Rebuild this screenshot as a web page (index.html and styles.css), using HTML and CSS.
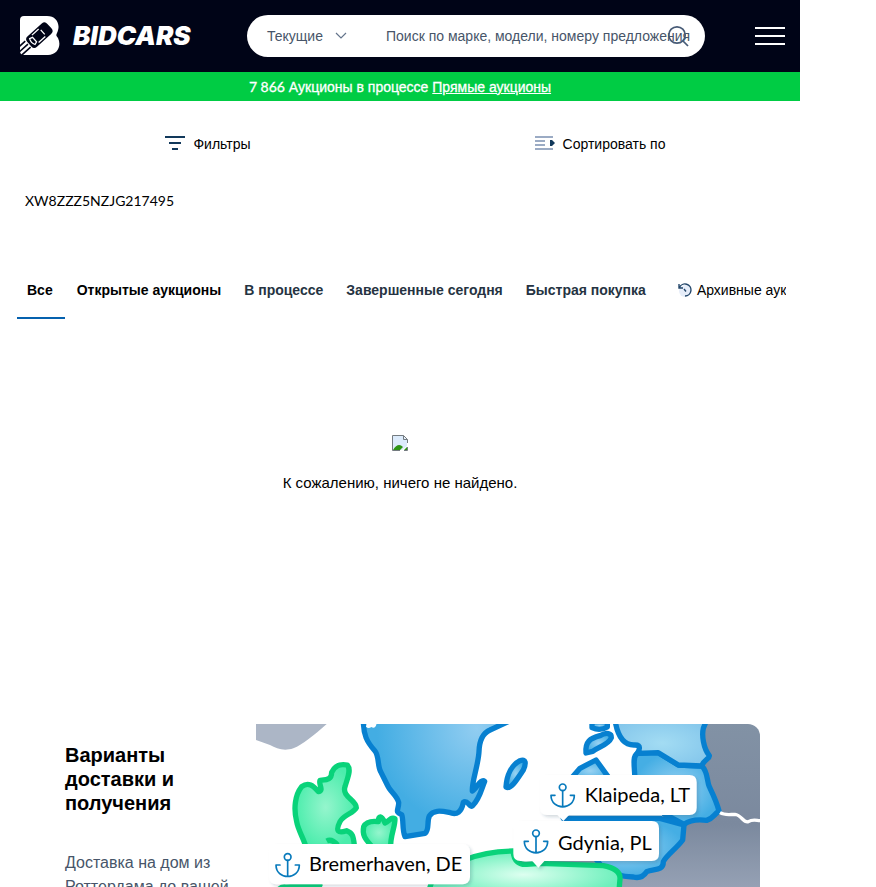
FILE: index.html
```html
<!DOCTYPE html>
<html lang="ru">
<head>
<meta charset="utf-8">
<title>BIDCARS</title>
<link rel="stylesheet" href="styles.css">
</head>
<body>
<div class="page">
  <header class="header">
    <a class="logo" href="#">
      <svg class="logo-mark" width="40" height="40" viewBox="0 0 40 40" aria-hidden="true">
        <path fill="#fff" d="M4 0H27C37 0 41 9 37 17C36 19 36 20 38 22C42 30 37 39 28 39H4Q0 39 0 35V4Q0 0 4 0Z"/>
        <g transform="translate(19 19.500) rotate(-42)">
          <rect x="-13" y="-7" width="27" height="14" rx="4" fill="#000417"/>
          <path fill="none" stroke="#fff" stroke-width="1.300" d="M-9-4Q-11 0-9 4L-6 3V-3ZM-5-5H4M-5 5H4M5-3V3"/>
          <path stroke="#000417" stroke-width="1.600" d="M-14-5H-22M-14-1H-27M-14 3H-26"/>
        </g>
      </svg>
      <span class="logo-name">BIDCARS</span>
    </a>
    <form class="search">
      <button class="search-type" type="button">Текущие
        <svg width="12" height="8" viewBox="0 0 12 8" aria-hidden="true"><path fill="none" stroke="#64748b" stroke-width="1.200" d="M1 1L6 6L11 1"/></svg>
      </button>
      <input class="search-input" type="text" aria-label="Поиск" placeholder="Поиск по марке, модели, номеру предложения">
      <button class="search-go" type="submit" aria-label="Найти">
        <svg width="22" height="22" viewBox="0 0 22 22" aria-hidden="true"><g fill="none" stroke="#475b76" stroke-width="1.700"><circle cx="10" cy="10" r="8.200"/><path d="M16 16L21 21"/></g></svg>
      </button>
    </form>
    <button class="menu" type="button" aria-label="Меню"><i></i><i></i><i></i></button>
  </header>
  <div class="live"><span class="latin">7 866</span> Аукционы в процессе <a href="#">Прямые аукционы</a></div>
  <div class="tools">
    <button type="button">
      <svg width="20" height="16" viewBox="0 0 20 16" aria-hidden="true"><path stroke="#12395b" stroke-width="2" d="M0 1H20M4 7H16M7 13H13"/></svg>Фильтры
    </button>
    <button type="button">
      <svg width="20" height="16" viewBox="0 0 20 16" aria-hidden="true"><path stroke="#9babc4" stroke-width="2" d="M0 1H18M0 5H10M0 9H10M0 13H18"/><path fill="#12395b" d="M15 4H17L20 7L17 10H15Z"/></svg>Сортировать по
    </button>
  </div>
  <p class="vin latin">XW8ZZZ5NZJG217495</p>
  <nav class="tabs">
    <a class="active" href="#">Все</a>
    <a class="dark" href="#">Открытые аукционы</a>
    <a href="#">В процессе</a>
    <a href="#">Завершенные сегодня</a>
    <a href="#">Быстрая покупка</a>
    <a class="archive" href="#">
      <svg width="14" height="14" viewBox="0 0 14 14" aria-hidden="true"><circle cx="7" cy="8" r="6" fill="#e6edf9"/><path fill="none" stroke="#24476b" stroke-width="1.400" d="M1 1V5H5M1.500 4.500A6 6 0 1 1 7 13M6 6L8 8.500"/></svg>Архивные аук
    </a>
  </nav>
  <section class="empty">
    <svg width="16" height="16" viewBox="0 0 16 16" aria-hidden="true"><path fill="#dcebfb" d="M1 1H11L15 5V11L10 15H1Z"/><path fill="#2e9415" d="M1 15Q6 7 11 12L8 15ZM12 15L15 12V15Z"/><path fill="none" stroke="#747b80" d="M15.500 8V4.500L11.500 .5H.5V15.500H8M11.500 .5V4.500H15.500M12 15.500H15.500V12"/></svg>
    <p>К сожалению, ничего не найдено.</p>
  </section>
  <section class="delivery">
    <div class="delivery-text">
      <h2>Варианты доставки и получения</h2>
      <p>Доставка на дом из Роттердама до вашей</p>
    </div>
    <svg class="map" viewBox="0 0 504 164" role="img" aria-label="Порты доставки">
      <defs>
        <radialGradient id="sweden" gradientUnits="userSpaceOnUse" cx="680" cy="40" r="300"><stop offset="0" stop-color="#91cdf1"/><stop offset="1" stop-color="#43ade3"/></radialGradient>
        <radialGradient id="green"><stop offset="0" stop-color="#95f5cd"/><stop offset="1" stop-color="#4bedac"/></radialGradient>
        <radialGradient id="poland"><stop offset="0" stop-color="#ddfff0"/><stop offset="1" stop-color="#6df0bc"/></radialGradient>
        <radialGradient id="blue"><stop offset="0" stop-color="#99d2f2"/><stop offset="1" stop-color="#45aee4"/></radialGradient>
        <radialGradient id="pale" r=".7"><stop offset="0" stop-color="#a3dcf3"/><stop offset="1" stop-color="#7fc3ea"/></radialGradient>
        <linearGradient id="land" x1="0" y1="0" x2="0" y2="1"><stop offset="0" stop-color="#8292a5"/><stop offset=".58" stop-color="#7b899e"/><stop offset="1" stop-color="#9aa5b8"/></linearGradient>
        <filter id="shadow" x="-10%" y="-20%" width="120%" height="150%"><feDropShadow dx="6" dy="6" stdDeviation="5" flood-color="#244664" flood-opacity=".2"/></filter>
        <g id="anchor" fill="none" stroke="#087abc" stroke-width="5" stroke-linecap="round"><circle cx="37" cy="12" r="10"/><path d="M37 22V70M2 36C2 82 72 82 72 36M2 36H14M72 36H60"/></g>
      </defs>
      <g transform="translate(-6 -9) scale(.333333)" stroke-width="16" stroke-linejoin="round">
        <path fill="#acb6c6" d="M18 20H238C195 58 160 88 130 100C100 110 80 100 60 90L18 75Z"/>
        <path fill="url(#sweden)" stroke="#0780d0" d="M340 15C340 60 350 80 375 108C388 125 382 152 392 170L412 210C420 230 440 240 446 262C447 285 432 290 455 299C461 312 456 345 465 365L525 355C539 345 530 320 538 303C550 285 570 287 597 292C622 302 635 290 640 262C652 252 660 280 668 272C690 250 695 220 704 199C692 190 680 220 667 228C665 200 685 150 687 110C688 75 697 55 720 45L785 15Z"/>
        <path fill="#fff" d="M350 25H380Q376 44 364 36Q355 43 348 35Z"/>
        <g fill="url(#green)" stroke="#09d37a">
          <path d="M170 405C165 375 145 350 140 320C130 280 135 240 155 215C175 200 190 212 205 230C223 225 205 210 210 196C230 194 245 195 245 172C255 150 270 146 292 150C305 165 292 190 285 215C275 245 319 255 319 278C310 295 280 300 270 320C255 350 265 355 290 347C312 355 310 370 315 405Z"/>
          <path d="M230 378Q245 370 263 390"/>
          <path d="M370 400C350 375 335 365 341 335C350 317 370 318 385 320C385 300 395 300 405 324C420 315 425 305 435 311C435 340 420 360 422 400Z"/>
          <path d="M76 540Q90 510 110 516L210 510Z"/>
        </g>
        <g transform="translate(750 0)">
          <path fill="url(#land)" d="M600 20H790V550H150V430L450 400Z"/>
          <g stroke="#0780d0">
            <path fill="url(#blue)" d="M18 216C20 180 35 150 60 137C78 130 79 145 70 165C50 195 32 225 18 216Z"/>
            <path fill="url(#blue)" d="M258 114C255 80 270 70 300 62C320 50 335 55 334 68C325 90 295 95 278 109Z"/>
            <path fill="url(#blue)" d="M276 20V38Q300 49 322 36V20Z"/>
            <path fill="url(#blue)" d="M205 200L240 160L288 135L335 200Z"/>
            <path fill="url(#blue)" d="M190 310H480L552 330L548 375C530 400 500 420 490 440C490 470 460 460 440 470C430 485 415 490 400 486C380 485 365 483 360 480L310 460Z"/>
            <path fill="url(#blue)" d="M405 200C405 160 395 125 412 115L475 113L535 150L605 153C625 170 620 200 628 215C640 240 650 260 657 288C640 300 640 310 620 316C590 312 570 315 552 328L490 295Z"/>
            <path fill="url(#pale)" d="M345 15C352 60 370 92 405 90C425 90 418 105 412 115L475 113L535 150L605 153C610 135 630 130 628 122C610 100 605 60 610 40L620 15Z"/>
          </g>
          <path fill="none" stroke="#fff" stroke-width="10" d="M660 293C675 302 690 298 705 298C725 300 730 325 745 320C760 310 770 318 790 317"/>
          <path fill="url(#poland)" stroke="#09d37a" d="M-220 550L-205 500Q-115 410 40 408C40 440 60 450 80 448L120 445L310 452C340 458 362 470 360 492L355 550Z"/>
          <g filter="url(#shadow)" fill="#fff">
            <path d="M142 180H568Q590 180 590 202V278Q590 300 568 300H207L190 318L173 300H142Q120 300 120 278V202Q120 180 142 180Z"/>
            <path d="M62 318H455Q477 318 477 340V416Q477 438 455 438H133L115 458L97 438H62Q40 438 40 416V340Q40 318 62 318Z"/>
          </g>
          <use href="#anchor" x="151" y="205"/>
          <use href="#anchor" x="71" y="343"/>
          <text x="254" y="261">Klaipeda, LT</text>
          <text x="174" y="404">Gdynia, PL</text>
        </g>
        <rect x="57" y="387" width="603" height="121" rx="22" fill="#fff" filter="url(#shadow)"/>
        <use href="#anchor" x="76" y="414"/>
        <text x="177" y="468">Bremerhaven, DE</text>
      </g>
    </svg>
  </section>
</div>
</body>
</html>
```
FILE: styles.css
```css
* { box-sizing: border-box; }
body { margin: 0; background: #fff; color: #000; font: 14px/20px "Liberation Sans", sans-serif; }
a { color: inherit; text-decoration: none; }
p, h2 { margin: 0; }
button, input { border: 0; padding: 0; background: none; font: inherit; color: inherit; }
svg { display: block; flex: none; }
.latin { font-family: Lato, sans-serif; }
.page { max-width: 800px; height: 100vh; overflow: hidden; }
.header { display: flex; align-items: center; height: 72px; padding: 0 15px 0 20px; background: #000417; color: #fff; }
.logo { display: flex; align-items: center; gap: 13px; width: 227px; }
.logo-name { font: italic 900 26px/30px Inter, sans-serif; }
.search { display: flex; align-items: center; flex: 1; height: 42px; padding: 0 16px 0 20px; border-radius: 21px; background: #fff; color: #475569; }
.search-type { display: flex; align-items: center; gap: 12px; width: 119px; }
.search-input { flex: 1; min-width: 0; height: 40px; margin-right: -26px; outline: 0; }
.search-input::placeholder { color: #475569; opacity: 1; }
.menu { display: grid; gap: 6px; width: 30px; margin-left: 50px; }
.menu i { height: 2px; background: #fff; }
.live { height: 29px; padding-top: 5px; background: #00cc44; color: #fff; text-align: center; -webkit-text-stroke: 0.3px #fff; }
.live a { text-decoration: underline; }
.tools { display: grid; grid-template-columns: 1fr 1fr; padding: 33px 4px 0 12px; }
.tools button { display: flex; align-items: center; justify-content: center; gap: 8px; }
.vin { padding: 37px 25px 0; }
.tabs { display: flex; height: 58px; margin: 50px 14px 0 17px; overflow: hidden; white-space: nowrap; color: #253342; font-weight: 700; }
.tabs a { flex: none; padding: 19px 12px 0 11px; }
.tabs .active { padding-left: 10px; color: #000; border-bottom: 2px solid #0561ae; }
.tabs .dark { padding-left: 12px; color: #000; }
.tabs .archive { display: flex; align-items: flex-start; gap: 5px; padding-left: 20px; padding-right: 0; color: #000; font-weight: 400; }
.archive svg { margin-top: 3px; }
.empty { display: grid; justify-items: center; gap: 22px; height: 405px; padding-top: 116px; align-content: start; font-size: 15px; }
.delivery { display: grid; grid-template-columns: 191px 1fr; padding: 0 40px 0 65px; }
.delivery-text { padding: 19px 20px 0 0; color: #475569; font-size: 16px; line-height: 24px; }
.delivery h2 { margin-bottom: 36px; color: #000; font-size: 20px; line-height: 24px; }
.map { width: 100%; border-top-right-radius: 12px; }
.map text { font: 60px Lato, sans-serif; fill: #000; stroke: none; }
```
